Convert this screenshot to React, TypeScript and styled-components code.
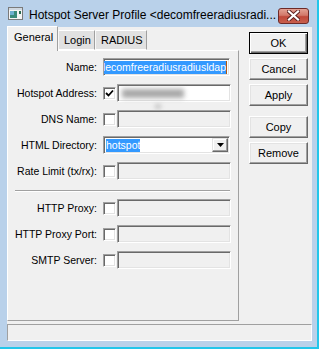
import styled, { createGlobalStyle } from "styled-components";

const GlobalStyle = createGlobalStyle`
  html, body {
    margin: 0;
    padding: 0;
    background: #b9d1ea;
  }
  body {
    font-family: "Liberation Sans", Arial, sans-serif;
    color: #000;
  }
`;

const Window = styled.div`
  width: 317px;
  height: 347px;
  background: #b9d1ea;
  border-right: 2px solid #22c6ea;
  border-bottom: 2px solid #22c6ea;
  display: flex;
  flex-direction: column;
`;

const TitleBar = styled.div`
  height: 27px;
  display: flex;
  align-items: center;
  padding: 0 8px 0 8px;
  box-sizing: border-box;
`;

const TitleText = styled.div`
  flex: 1;
  margin-left: 6px;
  font-size: 12px;
  white-space: nowrap;
  padding-top: 2px;
`;

const CloseButton = styled.div`
  width: 31px;
  height: 16px;
  margin-top: 4px;
  box-sizing: border-box;
  border: 1px solid #6d2a28;
  border-radius: 3px;
  background: linear-gradient(#e3a194 0%, #d2786a 45%, #c0483a 55%, #c85f4d 100%);
  display: flex;
  align-items: center;
  justify-content: center;
`;

const Client = styled.div`
  margin-left: 7px;
  width: 305px;
  height: 314px;
  background: #f0f0f0;
  display: flex;
  flex-direction: column;
`;

const Main = styled.div`
  height: 297px;
  display: flex;
`;

const LeftColumn = styled.div`
  width: 232px;
  display: flex;
  flex-direction: column;
`;

const TabStrip = styled.div`
  height: 23px;
  display: flex;
  align-items: flex-end;
  position: relative;
  z-index: 1;
`;

const Tab = styled.div<{ $active?: boolean }>`
  box-sizing: border-box;
  height: ${(p) => (p.$active ? "25px" : "20px")};
  margin-bottom: ${(p) => (p.$active ? "-1px" : "0")};
  width: ${(p) => p.$w}px;
  padding: ${(p) => (p.$active ? "4px 0 0 6px" : "3px 0 0 5px")};
  font-size: 11px;
  background: ${(p) => (p.$active ? "#f0f0f0" : "#e1e1e1")};
  border-top: 1px solid #fff;
  border-left: 1px solid ${(p) => (p.$active ? "#fff" : "#f8f8f8")};
  border-right: 1px solid #a0a0a0;
  ${(p) => (p.$active ? "" : "border-bottom: 1px solid #fff;")}
` as any;

const Panel = styled.div`
  height: 271px;
  box-sizing: border-box;
  border-top: 1px solid #fff;
  border-left: 1px solid #fff;
  border-right: 1px solid #a0a0a0;
  border-bottom: 1px solid #a0a0a0;
  padding-top: 7px;
  display: flex;
  flex-direction: column;
`;

const Group = styled.div`
  display: flex;
  flex-direction: column;
  gap: 8px;
`;

const Row = styled.div`
  height: 18px;
  display: flex;
  align-items: center;
`;

const Label = styled.div`
  width: 89px;
  margin-right: 6px;
  text-align: right;
  font-size: 10.5px;
  white-space: nowrap;
`;

const Field = styled.div<{ $enabled?: boolean; $w?: number }>`
  position: relative;
  width: ${(p) => p.$w ?? 114}px;
  height: 18px;
  box-sizing: border-box;
  border-top: 1px solid #a0a0a0;
  border-left: 1px solid #a0a0a0;
  border-right: 1px solid #fff;
  border-bottom: 1px solid #fff;
  box-shadow: inset 1px 1px #696969, inset -1px -1px #e3e3e3;
  background: ${(p) => (p.$enabled ? "#fff" : "#f0f0f0")};
  display: flex;
  align-items: center;
  font-size: 10.5px;
`;

const Clip = styled.div`
  flex: 1;
  overflow: hidden;
  display: flex;
  justify-content: flex-end;
  align-items: center;
  padding: 0 2px;
  height: 100%;
`;

const Selected = styled.span`
  background: #3399ff;
  color: #fff;
  white-space: nowrap;
  line-height: 13px;
`;

const Caret = styled.span`
  width: 1px;
  height: 13px;
  background: #b05a10;
  flex: none;
`;

const Blurred = styled.span<{ $w: number; $h: number }>`
  display: block;
  width: ${(p) => p.$w}px;
  height: ${(p) => p.$h}px;
  background: #a8a8a8;
  filter: blur(2.5px);
  margin-left: 4px;
`;

const Smudge = styled.span`
  position: absolute;
  left: 37px;
  top: 19px;
  width: 6px;
  height: 5px;
  background: #c8c8c8;
  filter: blur(2px);
`;

const Check = styled.div`
  width: 13px;
  height: 13px;
  box-sizing: border-box;
  margin-right: 1px;
  border-top: 1px solid #a0a0a0;
  border-left: 1px solid #a0a0a0;
  border-right: 1px solid #fff;
  border-bottom: 1px solid #fff;
  box-shadow: inset 1px 1px #696969, inset -1px -1px #e3e3e3;
  background: #fff;
  display: flex;
  align-items: center;
  justify-content: center;
`;

const DropButton = styled.div`
  margin-left: auto;
  margin-right: 1px;
  width: 16px;
  height: 14px;
  box-sizing: border-box;
  background: #f0f0f0;
  border-top: 1px solid #e3e3e3;
  border-left: 1px solid #e3e3e3;
  border-right: 1px solid #696969;
  border-bottom: 1px solid #696969;
  box-shadow: inset -1px -1px #a0a0a0, inset 1px 1px #fff;
  display: flex;
  align-items: center;
  justify-content: center;
`;

const Separator = styled.div`
  margin: 10px 8px 7px 7px;
  border-top: 1px solid #a0a0a0;
  border-bottom: 1px solid #fff;
`;

const ButtonColumn = styled.div`
  margin-left: 10px;
  padding-top: 5px;
  width: 59px;
  display: flex;
  flex-direction: column;
  gap: 4px;
`;

const Button = styled.div<{ $default?: boolean; $space?: boolean }>`
  height: 22px;
  box-sizing: border-box;
  margin-top: ${(p) => (p.$space ? "6px" : "0")};
  background: #f0f0f0;
  font-size: 11px;
  display: flex;
  align-items: center;
  justify-content: center;
  border: 1px solid;
  border-color: ${(p) => (p.$default ? "#000" : "#fff #696969 #696969 #fff")};
  box-shadow: ${(p) =>
    p.$default
      ? "inset 1px 1px #fff, inset -1px -1px #696969, inset -2px -2px #a0a0a0"
      : "inset -1px -1px #a0a0a0, inset 1px 1px #e3e3e3"};
`;

const StatusBar = styled.div`
  height: 17px;
  box-sizing: border-box;
  width: 305px;
  border-top: 1px solid #a0a0a0;
  border-left: 1px solid #a0a0a0;
  border-right: 1px solid #fff;
  border-bottom: 1px solid #fff;
`;

const AppIcon = () => (
  <svg width="15" height="13" viewBox="0 0 15 13">
    <rect x="0.5" y="0.5" width="14" height="12" fill="#f4f4f4" stroke="#7a7a7a" />
    <rect x="1" y="1" width="13" height="2" fill="#d0d8e0" />
    <rect x="2" y="4" width="7" height="7" fill="#3a8a7a" />
    <rect x="2" y="4" width="4" height="4" fill="#6fb0d0" />
    <rect x="11" y="4" width="2" height="3" fill="#2a6a50" />
  </svg>
);

const CloseX = () => (
  <svg width="13" height="11" viewBox="0 0 13 11">
    <path
      d="M2 1.5 L11 9.5 M11 1.5 L2 9.5"
      stroke="#5a2020"
      strokeWidth="4"
      strokeLinecap="square"
    />
    <path
      d="M2 1.5 L11 9.5 M11 1.5 L2 9.5"
      stroke="#fff"
      strokeWidth="2.2"
      strokeLinecap="square"
    />
  </svg>
);

const CheckMark = () => (
  <svg width="9" height="9" viewBox="0 0 9 9">
    <path d="M1 4 L3.5 6.5 L8 1.5" stroke="#000" strokeWidth="1.8" fill="none" />
  </svg>
);

const DownArrow = () => (
  <svg width="7" height="4" viewBox="0 0 7 4">
    <path d="M0 0 H7 L3.5 4 Z" fill="#000" />
  </svg>
);

const Option = ({ label }: { label: string }) => (
  <Row>
    <Label>{label}</Label>
    <Check />
    <Field />
  </Row>
);

export default function App() {
  return (
    <>
      <GlobalStyle />
      <Window>
        <TitleBar>
          <AppIcon />
          <TitleText>Hotspot Server Profile &lt;decomfreeradiusradi...</TitleText>
          <CloseButton>
            <CloseX />
          </CloseButton>
        </TitleBar>
        <Client>
          <Main>
            <LeftColumn>
              <TabStrip>
                <Tab $active $w={51}>General</Tab>
                <Tab $w={37}>Login</Tab>
                <Tab $w={52}>RADIUS</Tab>
              </TabStrip>
              <Panel>
                <Group>
                  <Row>
                    <Label>Name:</Label>
                    <Field $enabled $w={127}>
                      <Clip>
                        <Selected>decomfreeradiusradiusldap</Selected>
                        <Caret />
                      </Clip>
                    </Field>
                  </Row>
                  <Row>
                    <Label>Hotspot Address:</Label>
                    <Check>
                      <CheckMark />
                    </Check>
                    <Field $enabled>
                      <Blurred $w={62} $h={9} />
                      <Smudge />
                    </Field>
                  </Row>
                  <Option label="DNS Name:" />
                  <Row>
                    <Label>HTML Directory:</Label>
                    <Field $enabled $w={127}>
                      <Selected style={{ marginLeft: 2 }}>hotspot</Selected>
                      <DropButton>
                        <DownArrow />
                      </DropButton>
                    </Field>
                  </Row>
                  <Option label="Rate Limit (tx/rx):" />
                </Group>
                <Separator />
                <Group>
                  <Option label="HTTP Proxy:" />
                  <Option label="HTTP Proxy Port:" />
                  <Option label="SMTP Server:" />
                </Group>
              </Panel>
            </LeftColumn>
            <ButtonColumn>
              <Button $default>OK</Button>
              <Button>Cancel</Button>
              <Button>Apply</Button>
              <Button $space>Copy</Button>
              <Button>Remove</Button>
            </ButtonColumn>
          </Main>
          <StatusBar />
        </Client>
      </Window>
    </>
  );
}
